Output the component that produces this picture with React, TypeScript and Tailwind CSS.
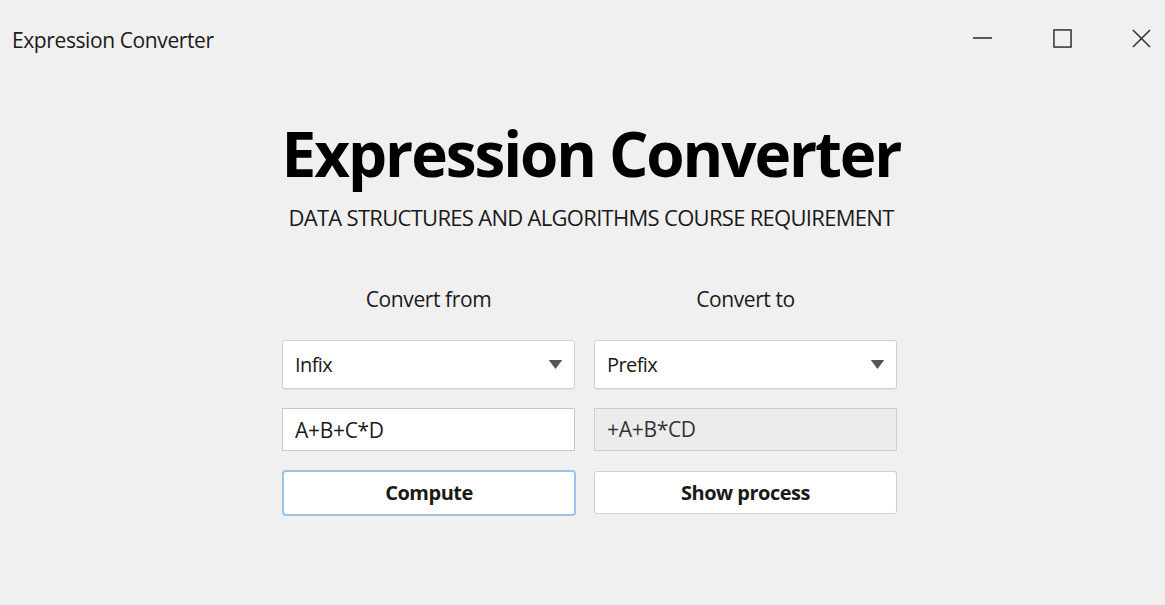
import { useState } from 'react';

const font = { fontFamily: '"Open Sans", "Noto Sans", sans-serif' };

function Chevron() {
  return (
    <svg viewBox="0 0 12 8" className="w-[15px] h-[9px] text-[#555]" fill="currentColor">
      <path d="M0 0h12L6 8z" />
    </svg>
  );
}

function Combo({ value, width }: { value: string; width: string }) {
  return (
    <div className={`${width} h-[49px] bg-white border border-[#d0d0d0] rounded-[3px] flex items-center justify-between pl-[12px] pr-[11px] text-[20px] text-[#1a1a1a] shadow-[0_1px_0_rgba(0,0,0,0.06)]`}>
      <span className="tracking-[-0.6px]">{value}</span>
      <Chevron />
    </div>
  );
}

export default function App() {
  const [expr, setExpr] = useState('A+B+C*D');

  return (
    <div className="w-full h-[605px] bg-[#f0f0f0] flex flex-col overflow-hidden" style={font}>
      {/* window title bar */}
      <div className="h-[80px] flex items-start justify-between">
        <div className="pl-[12px] pt-[25px] text-[21px] text-[#1a1a1a] tracking-[-0.4px]">Expression Converter</div>
        <div className="flex items-center pt-[28px] pr-[14px] gap-[60px] text-[#333]">
          <svg viewBox="0 0 20 20" className="w-[20px] h-[20px]" stroke="currentColor" strokeWidth="1.6" fill="none">
            <path d="M0 10h19" />
          </svg>
          <svg viewBox="0 0 20 20" className="w-[19px] h-[19px]" stroke="currentColor" strokeWidth="1.6" fill="none">
            <rect x="1" y="1" width="18" height="18" />
          </svg>
          <svg viewBox="0 0 20 20" className="w-[19px] h-[19px]" stroke="currentColor" strokeWidth="1.6" fill="none">
            <path d="M1 1l18 18M19 1L1 19" />
          </svg>
        </div>
      </div>

      <div className="flex flex-col items-center pl-[17px]">
        <h1 className="text-[62px] font-bold text-black leading-none mt-[42px] tracking-[-2.1px]">Expression Converter</h1>
        <p className="text-[22px] text-[#1a1a1a] mt-[17px] tracking-[-0.7px]">DATA STRUCTURES AND ALGORITHMS COURSE REQUIREMENT</p>
      </div>

      <div className="flex pl-[282px] gap-[19px] mt-[52px]">
        <div className="w-[293px] flex flex-col">
          <div className="text-center text-[21px] text-[#1a1a1a] tracking-[-0.4px] h-[26px] leading-[26px]">Convert from</div>
          <div className="mt-[28px]">
            <Combo value="Infix" width="w-[293px]" />
          </div>
          <input
            value={expr}
            onChange={e => setExpr(e.target.value)}
            className="mt-[19px] w-[293px] h-[43px] bg-white border border-[#c8c8c8] px-[12px] text-[21px] text-[#1a1a1a] tracking-[-0.3px] outline-none"
          />
          <button className="mt-[19px] w-[294px] h-[46px] bg-white border-2 border-[#9cc3ea] rounded-[4px] text-[20px] font-bold text-[#1a1a1a] tracking-[-0.5px]">
            Compute
          </button>
        </div>
        <div className="w-[303px] flex flex-col">
          <div className="text-center text-[21px] text-[#1a1a1a] tracking-[-0.4px] h-[26px] leading-[26px]">Convert to</div>
          <div className="mt-[28px]">
            <Combo value="Prefix" width="w-[303px]" />
          </div>
          <div className="mt-[19px] w-[303px] h-[43px] bg-[#ececec] border border-[#cfcfcf] px-[12px] flex items-center text-[21px] text-[#333] tracking-[-0.3px]">
            +A+B*CD
          </div>
          <button className="mt-[20px] w-[303px] h-[43px] bg-white border border-[#d0d0d0] rounded-[3px] text-[20px] font-bold text-[#1a1a1a] tracking-[-0.5px]">
            Show process
          </button>
        </div>
      </div>
    </div>
  );
}
